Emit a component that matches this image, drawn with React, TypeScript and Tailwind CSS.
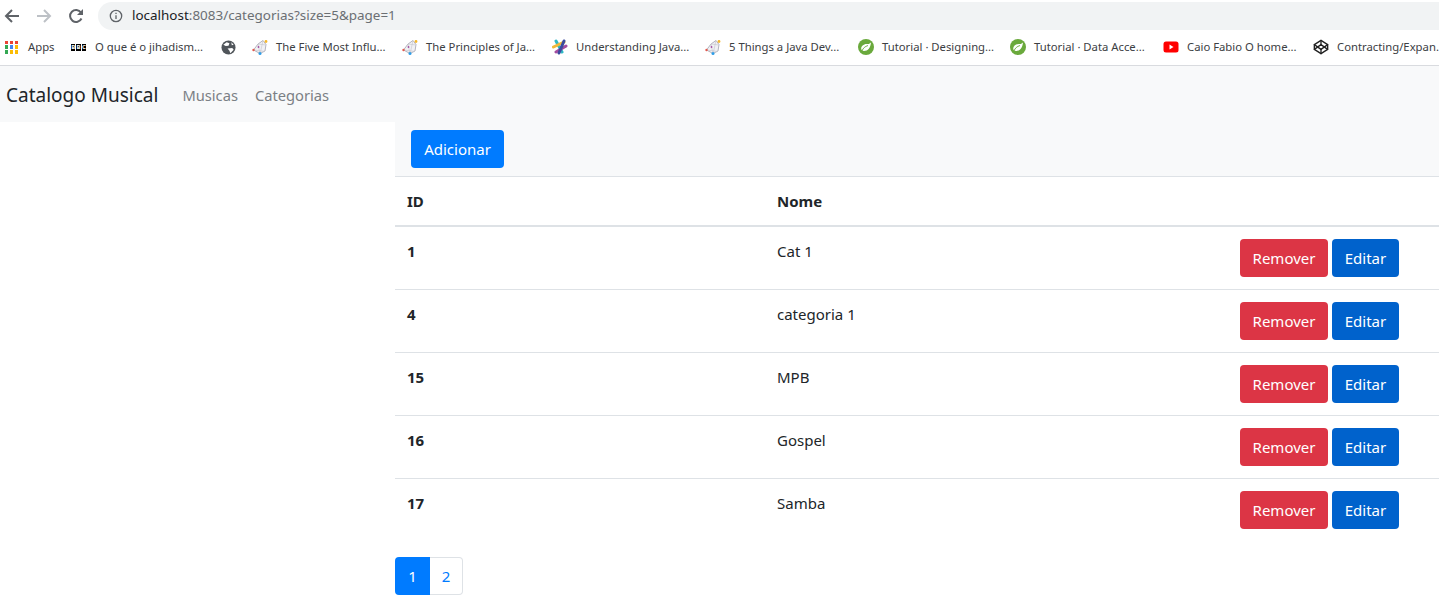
import React from "react";
import { Codepen } from "lucide-react";

const WireIcon = () => (
  <svg viewBox="0 0 16 16" className="h-4 w-4 shrink-0" fill="none">
    <path d="M1.500 11 6 5l5-3.500 3 4-1 6.500-5 2.500z" stroke="#b4b4be" strokeWidth="1" fill="#f1f1f4" />
    <path d="M6 5l2 10M1.500 11 13 12.500M11 1.500 8 15M6 5l8 1" stroke="#c8c8d0" strokeWidth="0.7" />
    <circle cx="6.500" cy="8" r="0.900" fill="#a24da0" />
    <circle cx="14" cy="2.500" r="1.400" fill="#f5b82e" />
    <circle cx="1.500" cy="11" r="1.200" fill="#e2574c" />
    <circle cx="8" cy="14.500" r="1.500" fill="#2f9ee8" />
  </svg>
);

const LeafIcon = () => (
  <svg viewBox="0 0 16 16" className="h-4 w-4 shrink-0">
    <circle cx="8" cy="8" r="8" fill="#6aa93c" />
    <path d="M13 3.500C12.500 8.500 10 12 6 12c-1.500 0-2.500-1-2.800-2C3 7 6 4.500 9.500 5c1.500.200 2.500-.5 3.500-1.500z" fill="#fff" />
    <path d="M4 12c1-3 3-4.500 6-5.500" stroke="#6aa93c" strokeWidth="0.9" fill="none" />
  </svg>
);

const bookmarks = [
  { icon: <WireIcon />, label: "The Five Most Influ...", w: "w-[150px]" },
  { icon: <WireIcon />, label: "The Principles of Ja...", w: "w-[150px]" },
  {
    icon: (
      <svg viewBox="0 0 16 16" className="h-4 w-4 shrink-0" fill="none" strokeWidth="3" strokeLinecap="round">
        <path d="M4 2l6 11" stroke="#2eb8c4" />
        <path d="M1.500 8 12 3" stroke="#f0b93c" />
        <path d="M4 13 14 7" stroke="#a24da0" />
        <path d="M12 2 7 14" stroke="#3b4a9f" />
      </svg>
    ),
    label: "Understanding Java...",
    w: "w-[153px]",
  },
  { icon: <WireIcon />, label: "5 Things a Java Dev...", w: "w-[153px]" },
  { icon: <LeafIcon />, label: "Tutorial · Designing...", w: "w-[152px]" },
  { icon: <LeafIcon />, label: "Tutorial · Data Acce...", w: "w-[153px]" },
  {
    icon: (
      <svg viewBox="0 0 16 16" className="h-4 w-4 shrink-0">
        <rect x="0.500" y="2.500" width="15" height="11" rx="2.500" fill="#f00" />
        <path d="M6.500 5.500v5l4-2.500z" fill="#fff" />
      </svg>
    ),
    label: "Caio Fabio O home...",
    w: "w-[150px]",
  },
  { icon: <Codepen className="h-4 w-4 shrink-0 text-[#222]" strokeWidth={2} />, label: "Contracting/Expan...", w: "" },
];

const rows = [
  { id: "1", nome: "Cat 1" },
  { id: "4", nome: "categoria 1" },
  { id: "15", nome: "MPB" },
  { id: "16", nome: "Gospel" },
  { id: "17", nome: "Samba" },
];

const appColors = ["#ea4335", "#ea4335", "#ea4335", "#34a853", "#4285f4", "#fbbc05", "#34a853", "#fbbc05", "#fbbc05"];

const App = () => {
  return (
    <div className="h-[611px] w-[1439px] overflow-hidden bg-white font-['Noto_Sans',sans-serif] text-[#212529]">
      {/* Browser toolbar */}
      <header className="flex h-[30px] items-center pl-[4px] pt-[1px]">
        <svg viewBox="0 0 16 16" className="h-4 w-4 text-[#5f6368]" fill="none" stroke="currentColor" strokeWidth="2">
          <path d="M15 8H2M8 2 2 8l6 6" />
        </svg>
        <svg viewBox="0 0 16 16" className="ml-[16px] h-4 w-4 text-[#bdc1c6]" fill="none" stroke="currentColor" strokeWidth="2">
          <path d="M1 8h13M8 2l6 6-6 6" />
        </svg>
        <svg viewBox="0 0 16 16" className="ml-[16px] h-4 w-4 text-[#5f6368]" fill="none" stroke="currentColor" strokeWidth="2">
          <path d="M13.500 10.500A6 6 0 1 1 13 4.500" />
          <path d="M15 1v6H9z" fill="currentColor" stroke="none" />
        </svg>
        <div className="ml-[14px] flex h-[28px] flex-1 items-center rounded-l-full bg-[#f1f3f4] pl-[11px]">
          <svg viewBox="0 0 16 16" className="h-[14px] w-[14px] text-[#5f6368]" fill="none" stroke="currentColor" strokeWidth="1.500">
            <circle cx="8" cy="8" r="6.500" />
            <path d="M8 7v4.500M8 4.200v1.600" />
          </svg>
          <span className="ml-[9px] text-[13.450px] text-[#6b6f73]">
            <span className="text-[#202124]">localhost</span>:8083/categorias?size=5&amp;page=1
          </span>
        </div>
      </header>

      {/* Bookmarks */}
      <nav className="flex h-[36px] items-center overflow-hidden whitespace-nowrap border-b border-[#d9dbdf] pb-[1px] pl-[5px] text-[11.300px] text-[#3c4043]">
        <div className="grid h-[13px] w-[13px] shrink-0 grid-cols-3 gap-[1.500px]">
          {appColors.map((c, i) => (
            <span key={i} style={{ background: c }} />
          ))}
        </div>
        <span className="ml-[10px] w-[43px] shrink-0">Apps</span>
        <span className="flex h-[7px] w-[15px] shrink-0 gap-[1px] font-bold leading-[7px] text-white">
          <span className="flex-1 bg-black text-center text-[6px]">B</span>
          <span className="flex-1 bg-black text-center text-[6px]">B</span>
          <span className="flex-1 bg-black text-center text-[6px]">C</span>
        </span>
        <span className="ml-[9px] w-[126px] shrink-0">O que é o jihadism...</span>
        <svg viewBox="0 0 16 16" className="mr-[16px] h-[15px] w-[15px] shrink-0">
          <circle cx="8" cy="8" r="7.500" fill="#50555a" />
          <path d="M2.500 5 6 2.500l3 1-1 2.500-3 .5zM7 9l5-.5 1.500 2L10 14l-1-2.500zM11 2.500l2.500 2.500-2 .5z" fill="#fff" />
        </svg>
        {bookmarks.map((b) => (
          <span key={b.label} className={`flex shrink-0 items-center gap-[8px] ${b.w}`}>
            {b.icon}
            {b.label}
          </span>
        ))}
      </nav>

      {/* App navbar */}
      <div className="flex h-[56px] items-center bg-[#f8f9fa] pl-[6px] pt-[2px]">
        <span className="text-[19px] text-[#212529]">Catalogo Musical</span>
        <span className="ml-[24px] text-[14.700px] text-[#7b8085]">Musicas</span>
        <span className="ml-[17px] text-[14.700px] text-[#7b8085]">Categorias</span>
      </div>

      <div className="flex">
        <div className="w-[395px] shrink-0" />
        <main className="flex-1">
          <div className="flex h-[55px] items-start border-b border-[#dee2e6] bg-[#f8f9fa] pl-[16px] pt-[8px]">
            <button className="h-[38px] w-[93px] rounded-[4px] bg-[#007bff] text-[15px] text-white">Adicionar</button>
          </div>
          <div className="flex h-[50px] items-center border-b-2 border-[#dee2e6] text-[15px] font-bold">
            <span className="w-[382px] pl-[12px]">ID</span>
            <span>Nome</span>
          </div>
          {rows.map((r, i) => (
            <div key={r.id} className={`flex h-[63px] pt-[12px] text-[15px] ${i < rows.length - 1 ? "border-b border-[#dee2e6]" : ""}`}>
              <span className="w-[382px] pl-[12px] pt-[1px] font-bold">{r.id}</span>
              <span className="pt-[1px]">{r.nome}</span>
              <div className="ml-auto mr-[40px] flex gap-[4px]">
                <button className="h-[38px] w-[88px] rounded-[4px] bg-[#dc3545] text-[15px] text-white">Remover</button>
                <button className="h-[38px] w-[67px] rounded-[4px] bg-[#0062cc] text-[15px] text-white">Editar</button>
              </div>
            </div>
          ))}
          <div className="mt-[15px] flex h-[38px] w-[68px] text-[15px]">
            <span className="flex w-[35px] items-center justify-center rounded-l-[4px] bg-[#007bff] text-white">1</span>
            <span className="flex flex-1 items-center justify-center rounded-r-[4px] border border-l-0 border-[#dee2e6] text-[#007bff]">2</span>
          </div>
        </main>
      </div>
    </div>
  );
};

export default App;
